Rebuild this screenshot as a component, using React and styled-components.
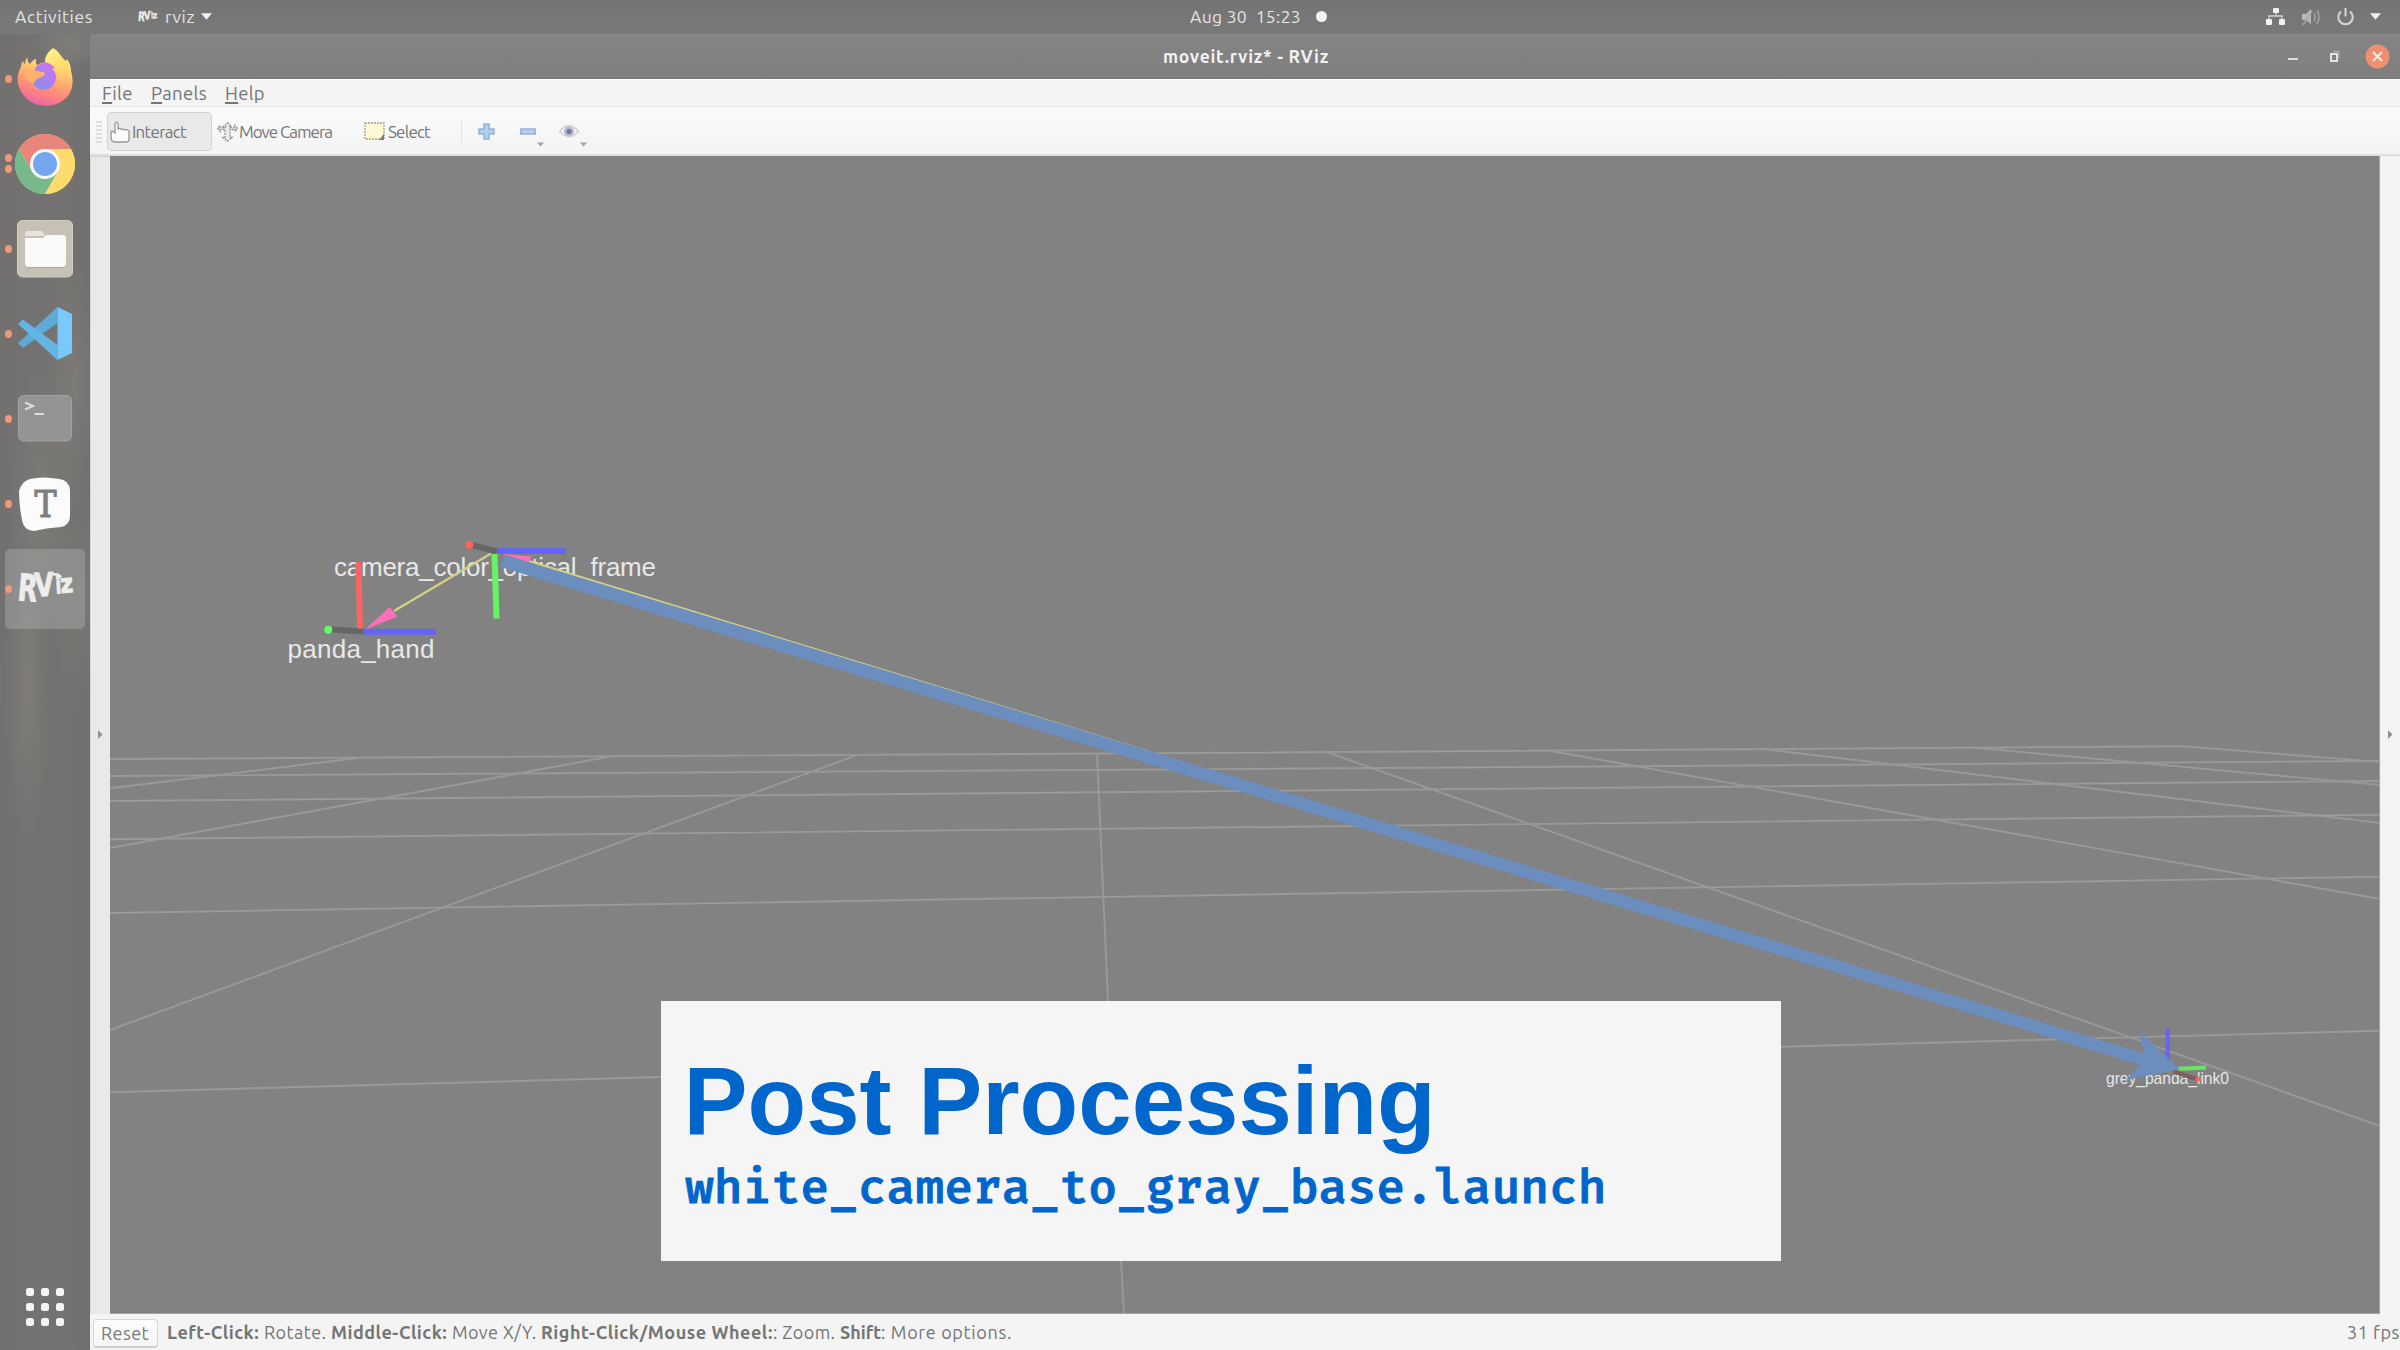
import React, { useLayoutEffect, useRef, useState } from "react";
import styled, { createGlobalStyle } from "styled-components";

const GlobalStyle = createGlobalStyle`
  html, body { margin: 0; padding: 0; background: #828282; overflow: hidden; }
  * { box-sizing: border-box; }
  svg { display: block; flex: none; }
`;

const UI_FONT = `Ubuntu, "Noto Sans", "Open Sans", sans-serif`;

const Desktop = styled.div`
  width: 2400px;
  height: 1350px;
  display: grid;
  grid-template: 34px 1316px / 90px 2310px;
  font-family: ${UI_FONT};
  overflow: hidden;
`;

const TopBar = styled.header`
  grid-column: 1 / 3;
  display: grid;
  grid-template-columns: 1190px 1076px 134px;
  background: linear-gradient(#747474, #797979);
  color: #e4e4e4;
  font-size: 17.5px;
  line-height: 33px;
`;

const BarGroup = styled.div`
  display: flex;
  align-items: center;
  gap: ${(p) => p.$gap || 0}px;
  padding-left: ${(p) => p.$left || 0}px;
  height: 33px;
`;

const Word = styled.span`
  display: inline-block;
  flex: none;
  width: ${(p) => p.$width}px;
  white-space: pre;
  font-weight: ${(p) => (p.$bold ? 700 : 400)};
`;

const AppMenu = styled.div`
  display: flex;
  align-items: center;
  gap: 6px;
  margin-left: 43px;
`;

const Dot = styled.i`
  width: 11px;
  height: 11px;
  border-radius: 50%;
  background: #f3f3f3;
`;

const Dock = styled.nav`
  display: flex;
  flex-direction: column;
  padding: 2px 0 24px;
  background:
    radial-gradient(ellipse 26px 130px at 74px 350px, #85817c99, transparent),
    radial-gradient(ellipse 34px 150px at 40px 470px, #85817c88, transparent),
    radial-gradient(ellipse 22px 170px at 27px 650px, #8a868188, transparent),
    radial-gradient(ellipse 30px 130px at 84px 560px, #837c7888, transparent),
    radial-gradient(ellipse 40px 26px at 70px 10px, #7f7e7b, transparent),
    linear-gradient(90deg, #727170, #747371 70%, #6f6f6e);
`;

const Slot = styled.div`
  height: 85px;
  display: grid;
  grid-template-columns: 90px;
  place-items: center;
  position: relative;
`;

const Tile = styled.div`
  width: 80px;
  height: 80px;
  padding-bottom: ${(p) => p.$lift || 0}px;
  border-radius: 5px;
  display: grid;
  place-items: center;
  background: ${(p) => (p.$active ? "rgba(200,200,200,.3)" : "transparent")};
`;

const Running = styled.div`
  position: absolute;
  left: 5px;
  top: 0;
  bottom: 0;
  display: flex;
  flex-direction: column;
  justify-content: center;
  gap: 3px;
`;

const RunDot = styled.i`
  width: 7px;
  height: 8px;
  border-radius: 50%;
  background: #f19878;
`;

const AppsGrid = styled.div`
  margin: auto auto 0;
  display: grid;
  grid-template-columns: repeat(3, 8px);
  gap: 7px;
`;

const AppsDot = styled.i`
  height: 8px;
  border-radius: 2.5px;
  background: #f4f4f3;
`;

const Window = styled.main`
  display: grid;
  grid-template-rows: 45px 28px 49px 1158px 36px;
  background: #f4f4f4;
  color: #777;
`;

const TitleBar = styled.div`
  display: grid;
  grid-template-columns: 1073px 1125px 112px;
  align-items: center;
  background: linear-gradient(#848484, #7f7f7f);
  color: #f2f2f2;
  font-size: 17.5px;
  border-bottom: 1px solid #7a7a7a;
`;

const MenuBar = styled.div`
  display: flex;
  align-items: center;
  gap: 18px;
  padding-left: 12px;
  border-top: 1px solid #fff;
  border-bottom: 1px solid #e6e6e6;
  font-size: 18.5px;
  line-height: 26px;
  color: #757575;
`;

const Mnemonic = styled.span`
  text-decoration: underline;
  text-decoration-thickness: 2px;
  text-underline-offset: 2px;
`;

const ToolBar = styled.div`
  display: flex;
  align-items: center;
  padding: 2px 0 0 6px;
  background: linear-gradient(#fbfbfb, #f3f3f3);
  border-bottom: 2px solid #dedede;
  font-size: 17px;
  color: #757575;
`;

const Grip = styled.i`
  width: 6px;
  height: 24px;
  margin-right: 5px;
  background: radial-gradient(circle, #d4d4d4 1px, transparent 1.3px) 0 0 / 3px 4px;
`;

const Tool = styled.div`
  display: flex;
  align-items: center;
  gap: ${(p) => p.$gap}px;
  width: ${(p) => p.$width}px;
  height: 39px;
  padding-left: 2px;
  border: 1px solid ${(p) => (p.$active ? "#d3d3d3" : "transparent")};
  border-radius: 4px;
  background: ${(p) => (p.$active ? "#e9e9e9" : "transparent")};
`;

const Separator = styled.i`
  width: 1px;
  height: 24px;
  margin-right: 16px;
  background: #e4e4e4;
`;

const Body = styled.div`
  display: grid;
  grid-template-columns: 20px 2270px 20px;
`;

const Splitter = styled.div`
  display: flex;
  padding: 573px 0 0 7px;
  border-left: 1px solid ${(p) => (p.$left ? "#d8d8d8" : "#eee")};
  border-top: 1px solid ${(p) => (p.$left ? "#d0d0d0" : "#eee")};
  background: ${(p) => (p.$left ? "#e9e9e9" : "#f4f4f4")};
`;

const Viewport = styled.section`
  position: relative;
  background: #828282;
  border: solid #a2a2a2;
  border-width: 0 1px 1px 0;
  overflow: hidden;
`;

const Scene = styled.svg`
  width: 2270px;
  height: 1158px;
  font-family: "Liberation Sans", Arial, sans-serif;
`;

const Caption = styled.aside`
  position: absolute;
  left: 551px;
  top: 845px;
  width: 1120px;
  height: 260px;
  padding: 45px 24px;
  background: #f5f5f5;
  color: #0066cc;
`;

const CaptionTitle = styled.h1`
  margin: 0 0 1px -1.5px;
  font: 700 96px/110px "Liberation Sans", Arial, sans-serif;
  white-space: nowrap;
`;

const CaptionFile = styled.p`
  margin: 0;
  font: 500 48px/60px "Fira Mono", "DejaVu Sans Mono", monospace;
  -webkit-text-stroke: 1px #0066cc;
  white-space: nowrap;
`;

const StatusBar = styled.footer`
  display: flex;
  align-items: center;
  font-size: 18px;
  color: #757575;
`;

const ResetButton = styled.button`
  width: 65px;
  height: 29px;
  margin: 3px 9px 0 3px;
  padding: 0 0 0 7px;
  text-align: left;
  border: 1px solid #d6d6d6;
  border-bottom: 2px solid #cfcfcf;
  border-radius: 4px;
  background: linear-gradient(#fefefe, #f5f5f5);
  font: 400 18px/24px ${UI_FONT};
  color: #7b7b7b;
`;

const StatusText = styled.div`
  flex: 1;
  display: flex;
`;

function Fit({ width, bold, children }) {
  const box = useRef(null);
  const [spacing, setSpacing] = useState(0);
  useLayoutEffect(() => {
    const range = document.createRange();
    range.selectNodeContents(box.current);
    const natural = range.getBoundingClientRect().width;
    setSpacing((width - natural) / box.current.textContent.length);
  }, [width]);
  return (
    <Word ref={box} $width={width} $bold={bold} style={{ letterSpacing: spacing }}>
      {children}
    </Word>
  );
}

const Caret = ({ w = 11, h = 7, fill = "#f0f0f0" }) => (
  <svg width={w} height={h} viewBox="0 0 10 6"><path d="M0 0h10L5 6z" fill={fill} /></svg>
);

const RvizLogo = ({ width, height, fill }) => (
  <svg width={width} height={height} viewBox="-6 -14 66 64" fill={fill} stroke={fill} strokeWidth="1" fontFamily="'DejaVu Sans', sans-serif" fontWeight="700">
    <text transform="translate(-1 29) rotate(5) scale(.68 1)" fontSize="37">R</text>
    <text transform="translate(17 25.500) rotate(-3) scale(.76 .98)" fontSize="33">V</text>
    <text transform="translate(38 22.500) rotate(-3) scale(.7 1)" fontSize="23">i</text>
    <text transform="translate(43 22) rotate(-5) scale(.84 1)" fontSize="26">z</text>
    <path d="M35 3.500q6-1 8 3" fill="none" strokeWidth="2.500" />
  </svg>
);

const FirefoxIcon = () => (
  <svg width="56" height="60" viewBox="0 0 56 60">
    <defs>
      <linearGradient id="ffBody" x1=".7" y1="0" x2=".4" y2="1">
        <stop offset="0" stopColor="#fff07e" /><stop offset=".35" stopColor="#ffd070" />
        <stop offset=".6" stopColor="#ffa070" /><stop offset=".83" stopColor="#fd7d86" /><stop offset="1" stopColor="#e763ab" />
      </linearGradient>
      <linearGradient id="ffTail" x1=".3" y1="0" x2=".6" y2="1">
        <stop offset="0" stopColor="#fff588" /><stop offset=".6" stopColor="#ffd66c" /><stop offset="1" stopColor="#ffad6b" stopOpacity="0" />
      </linearGradient>
      <linearGradient id="ffGlobe" x1=".7" y1="0" x2=".3" y2="1">
        <stop offset="0" stopColor="#c974ee" /><stop offset="1" stopColor="#8c8eee" />
      </linearGradient>
    </defs>
    <path d="M10.500 10C10 13 11 15 13 17C15 14 17 12 19.500 12C18.500 14 18.500 16 20 18C25 15 31 14 36 17C34 9 38 3 36 1C42 4 43 9 49 14C49.500 13 50 12 50 12C53 16 54 20 54 24C57 34 56 44 49 51C38 62 17 61 8 50C-1 40 -1 28 4 20C4 17 5 15 6 14C6 14 7 17 8 17C8 14 9 12 10.500 10Z" fill="url(#ffBody)" />
    <path d="M36 1C31 5 28 9 28 15C38 17 44 24 43 33C42 38 38 42 34 44C44 43 50 37 51 29C52 17 41 14 36 1Z" fill="url(#ffTail)" />
    <path d="M18 22C20 17 26 15 31 16C34 17 36 19 38 21L35 22C38 24 39 27 39 31C38 38 33 43 27 43C20 43 16 38 16 32C16 27 17 25 18 22Z" fill="url(#ffGlobe)" />
    <path d="M8 24C12 22 16 23 20 24C23 25 27 25 28 26C28 29 24 30 22 31C19 32 18 35 16 36C10 34 7 30 8 24Z" fill="#ffb26d" />
  </svg>
);

const ChromeIcon = () => (
  <svg width="60" height="60" viewBox="0 0 60 60">
    <circle cx="30" cy="30" r="30" fill="#fddb6d" />
    <path d="M30 0A30 30 0 0 1 56 15H30L17 37L4 15A30 30 0 0 1 30 0Z" fill="#ea857c" />
    <path d="M4 15L17 37.500Q22 45 30 45L43 37.500L30 60A30 30 0 0 1 4 15Z" fill="#76b98b" />
    <path d="M56 15H30A15 15 0 0 1 43 37.500L30 60A30 30 0 0 0 56 15Z" fill="#fddb6d" />
    <circle cx="30" cy="30" r="15" fill="#f8f9fb" />
    <circle cx="30" cy="30" r="12" fill="#75a7f0" />
  </svg>
);

const FilesIcon = () => (
  <svg width="56" height="58" viewBox="0 0 56 58">
    <rect x=".5" y=".5" width="55" height="56.500" rx="5" fill="#c6c1b4" stroke="#d2cdc1" />
    <path d="M8 14Q8 11 11 11H23Q26 11 27 14L28 16H8Z" fill="#e7e4de" />
    <path d="M8 18H26L29 15H45Q49 15 49 18V43Q49 47 45 47H12Q8 47 8 43Z" fill="#fbfaf8" />
    <path d="M10 47.500H47" stroke="#aca89e" strokeWidth="1" />
  </svg>
);

const CodeIcon = () => (
  <svg width="54" height="53" viewBox="0 0 54 53">
    <path d="M0 36L39.500 0V16L5 41Z" fill="#5fa9d6" />
    <path d="M0 17L5 12.500L39.500 38V53Z" fill="#63b5e5" />
    <path d="M39.500 0L54 7V46L39.500 53Z" fill="#79cafa" />
  </svg>
);

const TerminalIcon = () => (
  <svg width="54" height="47" viewBox="0 0 54 47">
    <rect x=".5" y=".5" width="53" height="45.500" rx="5" fill="#949494" stroke="#a3a3a3" />
    <path d="M7 7.500L15 11L7 14.500M16.500 19H26" fill="none" stroke="#dedede" strokeWidth="2" />
  </svg>
);

const TyporaIcon = () => (
  <svg width="54" height="54" viewBox="0 0 54 54">
    <path d="M12 2Q25 -1 41 2Q51 3 52 13V39Q52 48 43 50Q28 51 16 54Q6 54 4 43Q1 28 1 14Q4 4 12 2Z" fill="#fbfbfb" />
    <text x="27.500" y="40" textAnchor="middle" fontFamily="'DejaVu Serif', serif" fontSize="37" fill="#7f7f7f" stroke="#7f7f7f" strokeWidth="1.200" textLength="22" lengthAdjust="spacingAndGlyphs">T</text>
  </svg>
);

const NetworkIcon = () => (
  <svg width="20" height="17" viewBox="0 0 20 17" fill="#f1f1f1">
    <rect x="7" y="0" width="6" height="5" rx="1" /><rect x="0" y="11" width="6" height="6" rx="1" /><rect x="13" y="11" width="6" height="6" rx="1" />
    <path d="M3 11V8H16V11M10 5V8" fill="none" stroke="#d2d2d2" strokeWidth="1.300" />
  </svg>
);

const VolumeIcon = () => (
  <svg width="19" height="18" viewBox="0 0 19 18">
    <path d="M0 6H4L9 1V16L4 12H0Z" fill="#b9b9b9" />
    <path d="M12 5Q14 9 12 13M15 2Q19 9 15 16M1 17L10 3" fill="none" stroke="#a9a9a9" strokeWidth="1.400" />
  </svg>
);

const PowerIcon = () => (
  <svg width="17" height="18" viewBox="0 0 17 18" fill="none" stroke="#d8d8d8" strokeWidth="2">
    <path d="M4 3.500A7.200 7.200 0 1 0 13 3.500M8.500 0V8.500" />
  </svg>
);

const WindowControls = () => (
  <svg width="112" height="44" viewBox="0 0 112 44" fill="none">
    <path d="M0 25H10" stroke="#dedede" strokeWidth="2" />
    <path d="M43 20H49V27H43Z" stroke="#e2e2e2" strokeWidth="2" />
    <path d="M45 17.500H51V24" stroke="#aaa" strokeWidth="1.300" />
    <circle cx="89.500" cy="22.500" r="12" fill="#ee8f70" />
    <path d="M85 18L94 27M94 18L85 27" stroke="#fbeae4" strokeWidth="2" />
  </svg>
);

const HandIcon = () => (
  <svg width="20" height="22" viewBox="0 0 20 22">
    <path d="M5 12V2.500Q6.500 0 8 2.500V8Q10 6.500 11.500 8.500Q13 7.500 15 9Q17 8 19 10V19Q18.500 21 16 21H4Q1 20 1 16V11Q2 9 5 12Z" fill="#fcfcfc" stroke="#979797" strokeWidth="1.300" />
  </svg>
);

const MoveIcon = () => (
  <svg width="21" height="20" viewBox="0 0 21 20" fill="#ececec" stroke="#939393" strokeWidth="1.300" strokeDasharray="2 1">
    <path d="M10.500 .7L14.500 4.500H12.500V5.500H18V3.500L20.500 6.500L18 9.500V7.500H13V15.500H15L10.500 19.300L6 15.500H8V7.500H3V9.500L.5 6.500L3 3.500V5.500H8.500V4.500H6.500Z" />
  </svg>
);

const SelectIcon = () => (
  <svg width="22" height="19" viewBox="0 0 22 19">
    <rect x="1" y="1" width="19" height="16" fill="#fffad4" stroke="#a0a088" strokeWidth="1.300" strokeDasharray="2 1" />
    <path d="M20 12V18H15Z" fill="#777" />
  </svg>
);

const PlusIcon = () => (
  <svg width="17" height="17" viewBox="0 0 17 17">
    <path d="M6 1H11V6H16V11H11V16H6V11H1V6H6Z" fill="#b4cfee" stroke="#93b3da" strokeWidth="1.500" />
  </svg>
);

const MinusIcon = () => (
  <svg width="16" height="7" viewBox="0 0 16 7">
    <rect x=".8" y="1" width="14.400" height="5" fill="#b4cfee" stroke="#93b3da" strokeWidth="1.500" />
  </svg>
);

const EyeIcon = () => (
  <svg width="20" height="15" viewBox="0 0 20 15">
    <path d="M0.500 7.500Q10-4 19.500 7.500Q10 18 .5 7.500Z" fill="#f3f3f3" stroke="#d0d0d0" strokeWidth="1.300" />
    <circle cx="10" cy="7.500" r="5" fill="#b6bad0" /><circle cx="10" cy="7.500" r="2.600" fill="#7478a0" />
  </svg>
);

const SideArrow = () => (
  <svg width="5" height="9" viewBox="0 0 5 9"><path d="M0 0L4.500 4.500L0 9Z" fill="#8f8f8f" /></svg>
);

const DropTool = styled.div`
  display: flex;
  align-items: center;
  height: 39px;
  margin-left: ${(p) => p.$left}px;
`;

const DropCaret = styled.span`
  align-self: flex-end;
  padding: 0 0 4px 1px;
`;

const GRID_LINES = [
  [110, 759, 1240, 752.7, 2183, 746.3],
  [110, 776, 1240, 769, 2380, 761],
  [110, 801, 1240, 791, 2380, 781],
  [110, 839.3, 1240, 827.3, 2380, 814.7],
  [110, 913, 1240, 894.7, 2380, 876.7],
  [110, 1092.3, 661, 1077, 1781, 1046.7, 2380, 1030.7],
  [358, 758, 110, 788.3],
  [612, 756.3, 110, 848],
  [858, 754.7, 110, 1030],
  [1097, 753, 1108, 1001, 1121, 1261, 1124, 1313],
  [1326.6, 752, 2380, 1126],
  [1551, 751, 2380, 899],
  [1764, 749, 2380, 823],
  [1978, 748, 2380, 785],
  [2183, 746.3, 2380, 762],
];

const FrameScene = () => (
  <Scene viewBox="110 156 2270 1158">
    <g fill="none" stroke="#999" strokeWidth="1.900">
      {GRID_LINES.map((line) => <polyline key={line.join()} points={line.join(" ")} />)}
    </g>
    <g fill="#e8e8e8">
      <text x="334" y="576" fontSize="26" textLength="322">camera_color_optical_frame</text>
      <text x="287.500" y="658" fontSize="26" textLength="147">panda_hand</text>
      <text x="2106" y="1084" fontSize="15.700" textLength="123">grey_panda_link0</text>
    </g>
    <g fill="none" stroke="#d2d083" strokeWidth="2.400">
      <path d="M491 553.500L394 611" /><path d="M528 561L1150 752.200" />
    </g>
    <g fill="none" stroke="#666" strokeWidth="6">
      <path d="M472 545L497 551.500M331 629.500L363 631.500" />
    </g>
    <path d="M365 629.500L389.500 607L397.500 616.500ZM501 553.500L531.500 556.500L529 563Z" fill="#f970b8" />
    <g fill="none" strokeWidth="6">
      <path d="M358.500 562L360 628.500" stroke="#fa6464" />
      <path d="M494.500 554L496.500 618.500" stroke="#64f564" />
      <path d="M363 631.800H436M497 551H566" stroke="#6464f5" />
    </g>
    <circle cx="469.300" cy="545" r="4" fill="#fa6464" />
    <circle cx="328.300" cy="629.700" r="4" fill="#64fa64" />
    <g fill="none" strokeWidth="4">
      <path d="M2167.700 1028.500V1062" stroke="#6464f5" />
      <path d="M2174 1069L2206 1067.500" stroke="#64e864" />
      <path d="M2173 1071L2196 1079" stroke="#7d5f5d" />
    </g>
    <circle cx="2198" cy="1079" r="2.500" fill="#f56464" />
    <path d="M505.500 555L2143.300 1053L2140.300 1032.300L2180 1069.300L2125.700 1080L2140 1064.700L499.700 566.700Z" fill="#6b8ebf" />
  </Scene>
);

const DOCK_ITEMS = [
  { name: "firefox", dots: 1, lift: 3, icon: <FirefoxIcon /> },
  { name: "chrome", dots: 2, icon: <ChromeIcon /> },
  { name: "files", dots: 1, icon: <FilesIcon /> },
  { name: "code", dots: 1, icon: <CodeIcon /> },
  { name: "terminal", dots: 1, icon: <TerminalIcon /> },
  { name: "typora", dots: 1, icon: <TyporaIcon /> },
  { name: "rviz", dots: 1, active: true, icon: <RvizLogo width={66} height={64} fill="#ededed" /> },
];

const MENUS = [["File", 31], ["Panels", 56], ["Help", 40]];

const HINTS = [
  ["Left-Click: ", 97, true], ["Rotate. ", 67], ["Middle-Click: ", 121, true], ["Move X/Y. ", 89],
  ["Right-Click/Mouse Wheel:", 232, true], [": Zoom. ", 67], ["Shift", 41, true], [": More options.", 131],
];

export default function App() {
  return (
    <>
      <GlobalStyle />
      <Desktop>
        <TopBar>
          <BarGroup $left={15}>
            <Fit width={78}>Activities</Fit>
            <AppMenu>
              <RvizLogo width={23} height={24} fill="#ededed" />
              <Fit width={30}>rviz</Fit>
              <Caret />
            </AppMenu>
          </BarGroup>
          <BarGroup $gap={15}>
            <Fit width={111}>Aug 30  15:23</Fit>
            <Dot />
          </BarGroup>
          <BarGroup $gap={16}>
            <NetworkIcon /><VolumeIcon /><PowerIcon /><Caret />
          </BarGroup>
        </TopBar>
        <Dock>
          {DOCK_ITEMS.map((item) => (
            <Slot key={item.name}>
              <Tile $active={item.active} $lift={item.lift}>{item.icon}</Tile>
              <Running>{Array.from({ length: item.dots }, (_, i) => <RunDot key={i} />)}</Running>
            </Slot>
          ))}
          <AppsGrid>{Array.from({ length: 9 }, (_, i) => <AppsDot key={i} />)}</AppsGrid>
        </Dock>
        <Window>
          <TitleBar>
            <span />
            <Fit width={166} bold>moveit.rviz* - RViz</Fit>
            <WindowControls />
          </TitleBar>
          <MenuBar>
            {MENUS.map(([label, width]) => (
              <Fit key={label} width={width}><Mnemonic>{label[0]}</Mnemonic>{label.slice(1)}</Fit>
            ))}
          </MenuBar>
          <ToolBar>
            <Grip />
            <Tool $active $width={105} $gap={2}><HandIcon /><Fit width={54}>Interact</Fit></Tool>
            <Tool $width={149} $gap={1}><span /><span /><MoveIcon /><Fit width={93}>Move Camera</Fit></Tool>
            <Tool $width={100} $gap={2}><SelectIcon /><Fit width={42}>Select</Fit></Tool>
            <Separator />
            <PlusIcon />
            <DropTool $left={25}>
              <MinusIcon />
              <DropCaret><Caret w={7} h={5} fill="#a4a4a4" /></DropCaret>
            </DropTool>
            <DropTool $left={15}>
              <EyeIcon />
              <DropCaret><Caret w={7} h={5} fill="#a4a4a4" /></DropCaret>
            </DropTool>
          </ToolBar>
          <Body>
            <Splitter $left><SideArrow /></Splitter>
            <Viewport>
              <FrameScene />
              <Caption>
                <CaptionTitle>Post Processing</CaptionTitle>
                <CaptionFile>white_camera_to_gray_base.launch</CaptionFile>
              </Caption>
            </Viewport>
            <Splitter><SideArrow /></Splitter>
          </Body>
          <StatusBar>
            <ResetButton><Fit width={48}>Reset</Fit></ResetButton>
            <StatusText>
              {HINTS.map(([text, width, bold]) => <Fit key={text} width={width} bold={bold}>{text}</Fit>)}
            </StatusText>
            <Fit width={53}>31 fps</Fit>
          </StatusBar>
        </Window>
      </Desktop>
    </>
  );
}
